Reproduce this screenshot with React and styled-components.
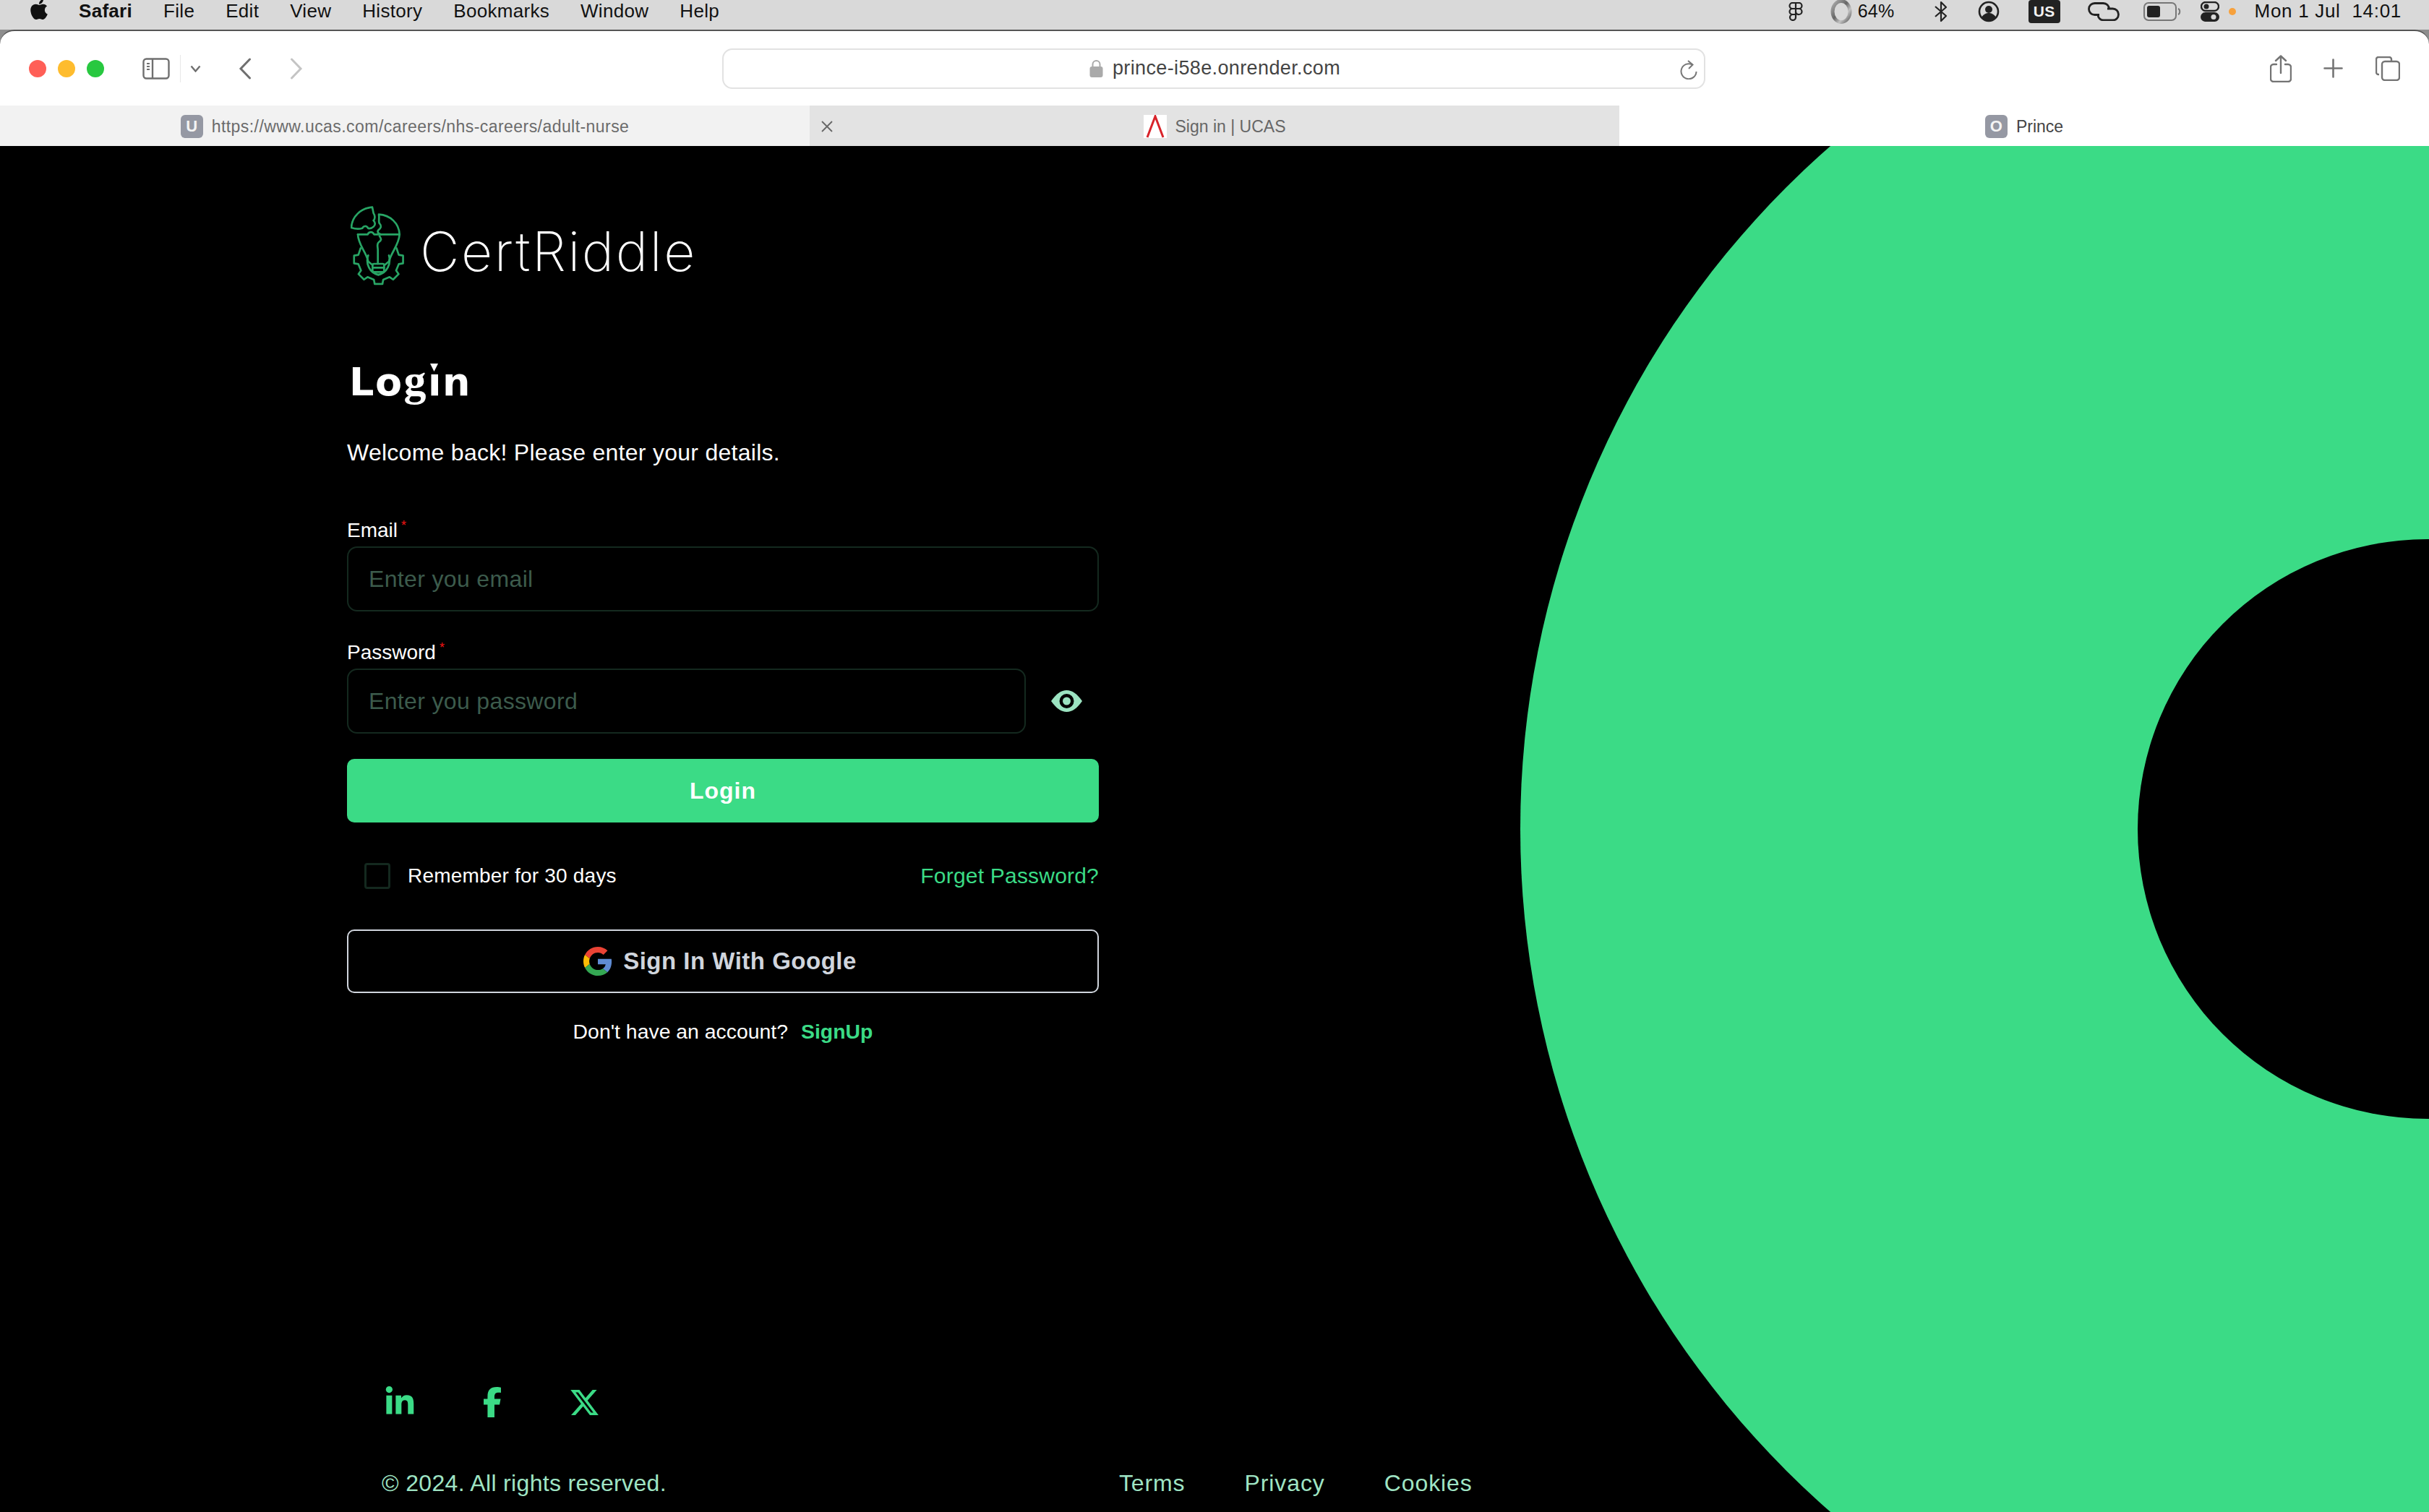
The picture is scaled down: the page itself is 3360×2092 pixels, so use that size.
import styled, { createGlobalStyle } from "styled-components";
import { FaApple, FaFacebookF, FaLinkedinIn, FaXTwitter } from "react-icons/fa6";

const green = "#3bdb86";

const Global = createGlobalStyle`
  * { box-sizing: border-box; }
  html, body { margin: 0; padding: 0; background: #d9d9d9; }
  body { font-family: "Liberation Sans", Arial, sans-serif; }
`;

const Screen = styled.div`
  width: 3360px;
  height: 2092px;
  display: flex;
  flex-direction: column;
  overflow: hidden;
  background: #8d8d8d;
`;

/* mac menu bar */
const MenuBar = styled.div`
  height: 41px;
  flex: none;
  background: #d9d9d9;
  display: flex;
  align-items: center;
  justify-content: space-between;
  padding: 0 38px 0 40px;
  font-size: 26px;
  color: #111;
  letter-spacing: 0.3px;
`;

const MenuLeft = styled.div`
  display: flex;
  align-items: center;
  gap: 43px;
  margin-top: -10px;
`;

const AppleLogo = styled(FaApple)`
  width: 28px;
  height: 32px;
  margin-right: -2px;
  margin-top: -6px;
`;

const MenuItem = styled.span`
  font-weight: ${(props) => (props.$bold ? 700 : 400)};
`;

const MenuRight = styled.div`
  display: flex;
  align-items: center;
  margin-top: -10px;
`;

const StatusIcon = styled.svg`
  display: block;
  flex: none;
  margin-left: ${(props) => props.$gap || 0}px;
`;

const Percent = styled.span`
  margin-left: 8px;
  font-size: 25px;
`;

const Badge = styled.span`
  margin-left: 40px;
  width: 44px;
  height: 32px;
  border-radius: 4px;
  background: #222;
  color: #f2f2f2;
  font-size: 21px;
  font-weight: 700;
  display: flex;
  align-items: center;
  justify-content: center;
`;

const Clock = styled.span`
  margin-left: 26px;
  white-space: pre;
  letter-spacing: 0.7px;
`;

/* safari toolbar */
const Toolbar = styled.div`
  height: 105px;
  flex: none;
  background: #fff;
  border-top: 2px solid #555;
  border-radius: 20px 20px 0 0;
  display: flex;
  align-items: center;
  padding: 0 40px;
`;

const Light = styled.span`
  width: 24px;
  height: 24px;
  border-radius: 50%;
  background: ${(props) => props.$color};
  margin-right: 16px;
  flex: none;
`;

const ToolIcon = styled.svg`
  display: block;
  flex: none;
  margin-left: ${(props) => props.$gap || 0}px;
`;

const Divider = styled.span`
  width: 1px;
  height: 38px;
  background: #e8e8e8;
  margin-left: 14px;
`;

const AddressBar = styled.div`
  width: 1360px;
  height: 56px;
  margin-left: 580px;
  border: 2px solid #e2e2e2;
  border-radius: 14px;
  position: relative;
  display: flex;
  align-items: center;
  justify-content: center;
  gap: 13px;
  padding-left: 3px;
  font-size: 27px;
  letter-spacing: 0.37px;
  color: #444;
`;

const Reload = styled.svg`
  position: absolute;
  right: 9px;
  top: 14px;
`;

const ToolRight = styled.div`
  margin-left: auto;
  display: flex;
  align-items: center;
`;

/* tabs */
const TabBar = styled.div`
  height: 56px;
  flex: none;
  display: flex;
  box-shadow: inset 0 2px 2px -1px #ccc;
`;

const Tab = styled.div`
  flex: 1;
  position: relative;
  display: flex;
  align-items: center;
  justify-content: center;
  gap: 12px;
  padding-top: 2px;
  font-size: 23px;
  background: ${(props) => props.$bg};
  color: ${(props) => props.$color};
`;

const TabUrl = styled.span`
  letter-spacing: 0.44px;
`;

const Favicon = styled.span`
  width: 31px;
  height: 32px;
  border-radius: 6px;
  background: #9598a3;
  color: #f4f4f4;
  font-size: 22px;
  font-weight: 700;
  display: flex;
  align-items: center;
  justify-content: center;
`;

const WhiteFavicon = styled.svg`
  display: block;
  background: #fff;
`;

const CloseMark = styled.svg`
  position: absolute;
  left: 16px;
  top: 21px;
`;

/* page */
const Page = styled.main`
  flex: 1;
  position: relative;
  overflow: hidden;
  background: #000;
  display: flex;
  flex-direction: column;
  color: #fff;
`;

const BigCircle = styled.div`
  position: absolute;
  left: 2103px;
  top: -310px;
  width: 2510px;
  height: 2510px;
  border-radius: 50%;
  background: ${green};

  &::after {
    content: "";
    position: absolute;
    left: 854px;
    top: 854px;
    width: 802px;
    height: 802px;
    border-radius: 50%;
    background: #000;
  }
`;

const Form = styled.section`
  width: 1040px;
  margin-left: 480px;
  padding-top: 82px;
  position: relative;
`;

const LogoRow = styled.div`
  display: flex;
  align-items: center;
  height: 112px;
`;

const LogoMark = styled.svg`
  display: block;
  margin-left: 5px;
`;

const LogoText = styled.span`
  font-family: Inter, "Liberation Sans", sans-serif;
  font-weight: 200;
  font-size: 75px;
  letter-spacing: 2.6px;
  margin-left: 20px;
  margin-top: 14px;
`;

const Title = styled.h1`
  margin: 97px 0 0 3px;
  height: 66px;
  font-family: "DejaVu Sans", sans-serif;
  font-weight: 700;
  font-size: 54px;
  line-height: 66px;
  letter-spacing: 1.5px;
`;

const FancyG = styled.span`
  font-family: "Liberation Serif", serif;
  font-size: 62px;
  margin: 0 1px;
`;

const FancyI = styled.span`
  position: relative;

  &::before {
    content: "";
    position: absolute;
    left: 0;
    right: 0;
    top: 4px;
    height: 16px;
    background: #000;
  }

  &::after {
    content: "";
    position: absolute;
    left: 3px;
    top: 6px;
    width: 11px;
    height: 11px;
    background: #fff;
    clip-path: polygon(0 0, 100% 0, 50% 100%);
  }
`;

const Subtitle = styled.p`
  margin: 45px 0 0;
  font-size: 32px;
  line-height: 44px;
  letter-spacing: 0.27px;
`;

const Field = styled.div`
  margin-top: ${(props) => props.$top}px;
`;

const Label = styled.label`
  display: block;
  font-size: 28px;
  line-height: 34px;
  height: 39px;
`;

const Star = styled.sup`
  color: #f01414;
  font-size: 18px;
  line-height: 0;
  margin-left: 5px;
  vertical-align: 10px;
`;

const InputRow = styled.div`
  display: flex;
  align-items: center;
`;

const Input = styled.input`
  width: ${(props) => props.$width}px;
  height: 90px;
  background: #000;
  border: 2px solid #14291f;
  border-radius: 14px;
  padding: 0 28px;
  font-family: "Liberation Sans", sans-serif;
  font-size: 32px;
  letter-spacing: 0.35px;
  color: #fff;
  outline: none;

  &::placeholder {
    color: #3c5b4c;
    opacity: 1;
  }
`;

const EyeIcon = styled.svg`
  display: block;
  margin-left: 35px;
`;

const PrimaryButton = styled.button`
  display: block;
  width: 100%;
  height: 88px;
  margin-top: 35px;
  border: 0;
  border-radius: 10px;
  background: ${green};
  color: #fff;
  font-family: "Liberation Sans", sans-serif;
  font-weight: 700;
  font-size: 32px;
  letter-spacing: 1px;
`;

const OptionsRow = styled.div`
  margin-top: 56px;
  height: 36px;
  display: flex;
  align-items: center;
  justify-content: space-between;
  font-size: 28px;
`;

const RememberLabel = styled.label`
  display: flex;
  align-items: center;
  gap: 24px;
  padding-left: 24px;
  letter-spacing: 0.2px;
`;

const Box = styled.span`
  width: 36px;
  height: 36px;
  border: 3px solid #14291f;
  border-radius: 4px;
`;

const ForgetLink = styled.a`
  color: ${green};
  font-size: 30px;
  letter-spacing: 0.2px;
`;

const GoogleButton = styled.button`
  width: 100%;
  height: 88px;
  margin-top: 56px;
  padding: 0 8px 0 0;
  background: #000;
  border: 2px solid #d0d5dd;
  border-radius: 10px;
  color: #d0d5dd;
  display: flex;
  align-items: center;
  justify-content: center;
  gap: 15px;
  font-family: "Liberation Sans", sans-serif;
  font-weight: 700;
  font-size: 33px;
  letter-spacing: 0.5px;
`;

const SignupLine = styled.p`
  margin: 35px 0 0;
  height: 36px;
  display: flex;
  align-items: center;
  justify-content: center;
  gap: 18px;
  font-size: 28.4px;
`;

const SignupLink = styled.a`
  color: ${green};
  font-weight: 700;
`;

const Footer = styled.footer`
  margin-top: auto;
  padding: 0 0 18px 528px;
  position: relative;
`;

const Socials = styled.div`
  display: flex;
  align-items: center;
  gap: 85px;
  padding-left: 3px;
  color: ${green};
`;

const FooterRow = styled.div`
  margin-top: 68px;
  display: flex;
  align-items: center;
  font-size: 32px;
  line-height: 44px;
  letter-spacing: 0.33px;
  color: #9fe4c4;
`;

const FooterLinks = styled.nav`
  display: flex;
  gap: 82px;
  margin-left: 626px;
  letter-spacing: 0.9px;
`;

const polar = (deg, r) => {
  const a = (deg * Math.PI) / 180;
  return `${(161 + r * Math.cos(a)).toFixed(1)} ${(262 + r * Math.sin(a)).toFixed(1)}`;
};

function Logo() {
  // gear outline around the bulb, open at the top
  const pts = [polar(-32, 88)];
  [0, 45, 90, 135, 180].forEach((deg) => {
    pts.push(polar(deg - 13, 86), polar(deg - 9, 103), polar(deg + 9, 103), polar(deg + 13, 86));
  });
  pts.push(polar(212, 88));
  const gear = "M" + pts.join(" L");
  return (
    <LogoMark width="76" height="110" viewBox="45 40 228 330" fill="none" stroke="#28a565" strokeWidth="8" strokeLinejoin="round" strokeLinecap="round">
      <path d="M135 45C85 50 50 85 48 130C62 135 82 136 94 132C98 122 112 120 118 133C126 134 134 132 140 126C150 118 146 106 140 100C148 92 146 78 140 70Z" />
      <path d="M162 75C210 78 246 112 248 158L172 158C160 156 154 148 160 140C172 132 174 122 166 114C158 108 166 96 162 75Z" />
      <path d="M75 158L116 158C120 146 136 144 142 158L172 158" />
      <path d="M165 165C172 176 176 180 162 190C152 198 158 210 158 222L158 280" />
      <path d="M75 158C76 200 110 232 118 270L136 285" />
      <path d="M248 158C246 200 214 232 204 270L186 285" />
      <path d={gear} />
      <path d="M118 245C106 280 124 318 160 326C196 318 214 280 204 245" />
      <rect x="136" y="280" width="48" height="34" rx="6" />
      <path d="M136 296L184 296" />
      <path d="M146 314C148 328 172 328 174 314" />
    </LogoMark>
  );
}

function GoogleMark() {
  return (
    <svg width="40" height="40" viewBox="0 0 48 48">
      <path fill="#ea4335" d="M24 9.500c3.500 0 6.700 1.200 9.200 3.600l6.900-6.900C35.900 2.400 30.500 0 24 0 14.600 0 6.500 5.400 2.600 13.200l8 6.200C12.400 13.700 17.700 9.500 24 9.500z" />
      <path fill="#5f8cd4" d="M46.900 24.500c0-1.600-.1-3.100-.4-4.500H24v9h12.900c-.6 3-2.200 5.500-4.700 7.200l7.700 6c4.500-4.200 7-10.300 7-17.700z" />
      <path fill="#fbbc05" d="M10.500 28.600c-.5-1.400-.8-3-.8-4.600s.3-3.200.8-4.600l-8-6.200C.9 16.500 0 20.100 0 24s.9 7.500 2.600 10.800l7.900-6.200z" />
      <path fill="#34a853" d="M24 48c6.500 0 11.900-2.100 15.900-5.800l-7.700-6c-2.200 1.500-4.900 2.300-8.200 2.300-6.300 0-11.600-4.200-13.500-10l-8 6.200C6.500 42.600 14.600 48 24 48z" />
    </svg>
  );
}

function LoginPage() {
  return (
    <Page>
      <BigCircle />
      <Form>
        <LogoRow>
          <Logo />
          <LogoText>CertRiddle</LogoText>
        </LogoRow>
        <Title>
          Lo<FancyG>g</FancyG>
          <FancyI>i</FancyI>n
        </Title>
        <Subtitle>Welcome back! Please enter your details.</Subtitle>
        <Field $top={69}>
          <Label>
            Email<Star>*</Star>
          </Label>
          <Input $width={1040} placeholder="Enter you email" />
        </Field>
        <Field $top={40}>
          <Label>
            Password<Star>*</Star>
          </Label>
          <InputRow>
            <Input $width={939} placeholder="Enter you password" />
            <EyeIcon width="43" height="30" viewBox="0 0 43 30">
              <path fill="#9be3c1" d="M0 15C7 5 14 0 21.500 0S36 5 43 15C36 25 29 30 21.500 30S7 25 0 15z" />
              <circle cx="21.500" cy="15" r="10" fill="#000" />
              <circle cx="21.500" cy="15" r="5.500" fill="#9be3c1" />
            </EyeIcon>
          </InputRow>
        </Field>
        <PrimaryButton>Login</PrimaryButton>
        <OptionsRow>
          <RememberLabel>
            <Box />
            Remember for 30 days
          </RememberLabel>
          <ForgetLink>Forget Password?</ForgetLink>
        </OptionsRow>
        <GoogleButton>
          <GoogleMark />
          Sign In With Google
        </GoogleButton>
        <SignupLine>
          Don't have an account?
          <SignupLink>SignUp</SignupLink>
        </SignupLine>
      </Form>
      <Footer>
        <Socials>
          <FaLinkedinIn size={44} />
          <FaFacebookF size={42} />
          <FaXTwitter size={43} />
        </Socials>
        <FooterRow>
          <span>© 2024. All rights reserved.</span>
          <FooterLinks>
            <span>Terms</span>
            <span>Privacy</span>
            <span>Cookies</span>
          </FooterLinks>
        </FooterRow>
      </Footer>
    </Page>
  );
}

export default function App() {
  return (
    <Screen>
      <Global />
      <MenuBar>
        <MenuLeft>
          <AppleLogo />
          <MenuItem $bold>Safari</MenuItem>
          <MenuItem>File</MenuItem>
          <MenuItem>Edit</MenuItem>
          <MenuItem>View</MenuItem>
          <MenuItem>History</MenuItem>
          <MenuItem>Bookmarks</MenuItem>
          <MenuItem>Window</MenuItem>
          <MenuItem>Help</MenuItem>
        </MenuLeft>
        <MenuRight>
          <StatusIcon width="20" height="26" viewBox="0 0 20 26" fill="none" stroke="#222" strokeWidth="2.200">
            <path d="M10 1H5.500a4 4 0 0 0 0 8H10V1zM10 1h4.500a4 4 0 0 1 0 8H10zM10 9H5.500a4 4 0 0 0 0 8H10V9zM10 9h4.500a4 4 0 0 1 0 8 4 4 0 0 1-4.500-4zM10 17H5.500a4 4 0 1 0 4.500 4z" />
          </StatusIcon>
          <StatusIcon $gap={38} width="30" height="34" viewBox="0 0 30 34" fill="none">
            <defs>
              <linearGradient id="ringSteel" x1="0" y1="0" x2="1" y2="1">
                <stop offset="0" stopColor="#b0b0b0" />
                <stop offset="0.45" stopColor="#666" />
                <stop offset="0.7" stopColor="#c4c4c4" />
                <stop offset="1" stopColor="#5c5c5c" />
              </linearGradient>
            </defs>
            <ellipse cx="15" cy="17" rx="12" ry="14.500" stroke="url(#ringSteel)" strokeWidth="5" />
          </StatusIcon>
          <Percent>64%</Percent>
          <StatusIcon $gap={54} width="20" height="30" viewBox="0 0 20 30" fill="none" stroke="#222" strokeWidth="2.200" strokeLinejoin="round">
            <path d="M2 8L17 21L10 28V2L17 9L2 22" />
          </StatusIcon>
          <StatusIcon $gap={41} width="30" height="30" viewBox="0 0 30 30">
            <circle cx="15" cy="15" r="13" fill="none" stroke="#222" strokeWidth="2.600" />
            <circle cx="15" cy="12" r="5" fill="#222" />
            <path d="M5 23c3-5 7-6 10-6s7 1 10 6a13 13 0 0 1-20 0z" fill="#222" />
          </StatusIcon>
          <Badge>US</Badge>
          <StatusIcon $gap={38} width="44" height="26" viewBox="0 0 44 26" fill="none" stroke="#222" strokeWidth="2.800">
            <path d="M16 17.500H9.500a8 8 0 0 1 0-16H21.500a8 8 0 0 1 8 8" />
            <path d="M27 9H34.500a8 8 0 0 1 0 16H22a8 8 0 0 1-8-8" />
          </StatusIcon>
          <StatusIcon $gap={33} width="52" height="28" viewBox="0 0 52 28" fill="none">
            <rect x="1" y="2" width="44" height="24" rx="6" stroke="#777" strokeWidth="2" />
            <rect x="5" y="6" width="18" height="16" rx="3" fill="#222" />
            <path d="M48 10c3 1 3 7 0 8" stroke="#777" strokeWidth="2" />
          </StatusIcon>
          <StatusIcon $gap={27} width="26" height="28" viewBox="0 0 26 28">
            <rect x="1" y="1" width="24" height="12" rx="6" fill="none" stroke="#222" strokeWidth="2.400" />
            <circle cx="8" cy="7" r="3.500" fill="#222" />
            <rect x="0" y="15" width="26" height="13" rx="6.500" fill="#222" />
            <circle cx="18" cy="21.500" r="3.500" fill="#d9d9d9" />
          </StatusIcon>
          <StatusIcon $gap={13} width="10" height="10" viewBox="0 0 10 10">
            <circle cx="5" cy="5" r="5" fill="#f7a13c" />
          </StatusIcon>
          <Clock>Mon 1 Jul  14:01</Clock>
        </MenuRight>
      </MenuBar>

      <Toolbar>
        <Light $color="#ff5f57" />
        <Light $color="#febc2e" />
        <Light $color="#28c840" />
        <ToolIcon $gap={37} width="38" height="30" viewBox="0 0 38 30" fill="none" stroke="#6f6f6f" strokeWidth="2.400">
          <rect x="1.500" y="1.500" width="35" height="27" rx="4" />
          <path d="M14 2v26" />
          <path d="M6 8h4M6 12h4M6 16h4" strokeWidth="2" />
        </ToolIcon>
        <Divider />
        <ToolIcon $gap={13} width="15" height="10" viewBox="0 0 15 10" fill="none" stroke="#6f6f6f" strokeWidth="2.400">
          <path d="M1.500 1.500L7.500 8.500L13.500 1.500" />
        </ToolIcon>
        <ToolIcon $gap={52} width="18" height="30" viewBox="0 0 18 30" fill="none" stroke="#6f6f6f" strokeWidth="3" strokeLinecap="round">
          <path d="M15.500 2L3 15L15.500 28" />
        </ToolIcon>
        <ToolIcon $gap={53} width="18" height="30" viewBox="0 0 18 30" fill="none" stroke="#c4c4c4" strokeWidth="3" strokeLinecap="round">
          <path d="M2.500 2L15 15L2.500 28" />
        </ToolIcon>
        <AddressBar>
          <svg width="19" height="25" viewBox="0 0 19 25" fill="none">
            <path d="M4.500 11V7a5 5 0 0 1 10 0v4" stroke="#aaa" strokeWidth="2" />
            <rect x="0.500" y="10" width="18" height="15" rx="3" fill="#aaa" />
          </svg>
          prince-i58e.onrender.com
          <Reload width="24" height="27" viewBox="0 0 24 27" fill="none" stroke="#777" strokeWidth="2">
            <path d="M17 6.500A10.500 10.500 0 1 0 22.500 16" />
            <path d="M11 1l6.500 5.500L12 12" />
          </Reload>
        </AddressBar>
        <ToolRight>
          <ToolIcon width="30" height="38" viewBox="0 0 30 38" fill="none" stroke="#747474" strokeWidth="2.400" strokeLinecap="round" strokeLinejoin="round">
            <path d="M9 13H5a4 4 0 0 0-4 4v16a4 4 0 0 0 4 4h20a4 4 0 0 0 4-4V17a4 4 0 0 0-4-4h-4" />
            <path d="M15 25V2M8 8l7-6.500L22 8" />
          </ToolIcon>
          <ToolIcon $gap={44} width="27" height="27" viewBox="0 0 27 27" fill="none" stroke="#747474" strokeWidth="2.600" strokeLinecap="round">
            <path d="M13.500 1.500v24M1.500 13.500h24" />
          </ToolIcon>
          <ToolIcon $gap={45} width="34" height="34" viewBox="0 0 34 34" fill="none" stroke="#747474" strokeWidth="2.400">
            <path d="M5 25H4a3 3 0 0 1-3-3V4a3 3 0 0 1 3-3h15a3 3 0 0 1 3 3v2" />
            <rect x="9" y="7" width="24" height="26" rx="4" />
          </ToolIcon>
        </ToolRight>
      </Toolbar>

      <TabBar>
        <Tab $bg="#f2f2f2" $color="#6b6b6b">
          <Favicon>U</Favicon>
          <TabUrl>https://www.ucas.com/careers/nhs-careers/adult-nurse</TabUrl>
        </Tab>
        <Tab $bg="#e3e3e3" $color="#666">
          <CloseMark width="16" height="16" viewBox="0 0 16 16" stroke="#666" strokeWidth="1.800">
            <path d="M1 1l14 14M15 1L1 15" />
          </CloseMark>
          <WhiteFavicon width="32" height="32" viewBox="0 0 32 32" fill="none" stroke="#d8232a" strokeWidth="3">
            <path d="M5 31L16 2L27 31" />
          </WhiteFavicon>
          Sign in | UCAS
        </Tab>
        <Tab $bg="#fff" $color="#444">
          <Favicon>O</Favicon>
          Prince
        </Tab>
      </TabBar>

      <LoginPage />
    </Screen>
  );
}
